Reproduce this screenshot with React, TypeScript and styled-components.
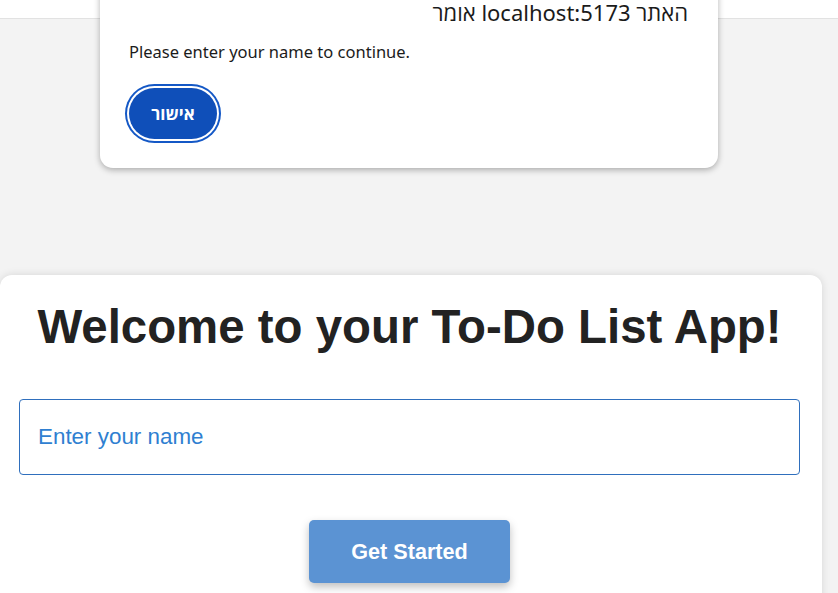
import React from "react";
import styled, { createGlobalStyle } from "styled-components";

const Global = createGlobalStyle`
  html, body { margin: 0; padding: 0; }
  body {
    background: #f3f3f3;
    font-family: "Liberation Sans", Arial, sans-serif;
    width: 838px;
    height: 593px;
    overflow: hidden;
    position: relative;
  }
`;

const TopBar = styled.div`
  height: 18px;
  background: #ffffff;
  border-bottom: 1px solid #e2e2e2;
`;

const Page = styled.div`
  padding-top: 256px;
`;

const Card = styled.div`
  width: 822px;
  box-sizing: border-box;
  background: #ffffff;
  border-radius: 12px;
  box-shadow: 0 0 8px rgba(0, 0, 0, 0.12);
  padding: 24px 22px 40px 19px;
  display: flex;
  flex-direction: column;
  align-items: center;
`;

const Heading = styled.h1`
  margin: 0;
  font-family: "Liberation Sans", Arial, sans-serif;
  font-weight: 700;
  font-size: 47.4px;
  line-height: 55px;
  color: #222222;
  text-align: center;
  white-space: nowrap;
`;

const NameInput = styled.input`
  margin-top: 45px;
  width: 100%;
  height: 76px;
  box-sizing: border-box;
  border: 1px solid #2f6fbd;
  border-radius: 4px;
  padding: 0 18px;
  font-family: "Liberation Sans", Arial, sans-serif;
  font-size: 22.4px;
  color: #222;
  outline: none;
  &::placeholder {
    color: #2f7fd1;
    opacity: 1;
  }
`;

const StartButton = styled.button`
  margin-top: 45px;
  width: 201px;
  height: 63px;
  border: none;
  border-radius: 5px;
  background: #5b93d3;
  color: #ffffff;
  font-family: "Liberation Sans", Arial, sans-serif;
  font-weight: 700;
  font-size: 21.6px;
  box-shadow: 0 4px 8px rgba(0, 0, 0, 0.25);
  cursor: pointer;
`;

const Dialog = styled.div`
  position: absolute;
  left: 100px;
  top: -20px;
  width: 618px;
  height: 188px;
  box-sizing: border-box;
  background: #ffffff;
  border-radius: 0 0 13px 13px;
  box-shadow: 0 2px 6px rgba(0, 0, 0, 0.3);
  padding: 20px 30px 0 29px;
  display: flex;
  flex-direction: column;
`;

const DialogTitle = styled.div`
  direction: rtl;
  text-align: right;
  font-family: "Noto Sans", "Open Sans", sans-serif;
  font-size: 22px;
  line-height: 26px;
  color: #1b1b1b;
  margin-top: -1px;
`;

const DialogText = styled.div`
  margin-top: 16px;
  font-family: "Noto Sans", "Open Sans", sans-serif;
  font-size: 16.5px;
  line-height: 22px;
  color: #1b1b1b;
`;

const OkButton = styled.button`
  margin-top: 25px;
  align-self: flex-start;
  width: 88px;
  height: 51px;
  border: none;
  border-radius: 26px;
  background: #0f4fb9;
  color: #ffffff;
  font-family: "Noto Sans", "Open Sans", sans-serif;
  font-weight: 700;
  font-size: 17px;
  box-shadow: 0 0 0 2px #ffffff, 0 0 0 4px #1458c6;
`;

export default function App() {
  return (
    <>
      <Global />
      <TopBar />
      <Page>
        <Card>
          <Heading>Welcome to your To-Do List App!</Heading>
          <NameInput placeholder="Enter your name" />
          <StartButton>Get Started</StartButton>
        </Card>
      </Page>
      <Dialog>
        <DialogTitle>האתר localhost:5173 אומר</DialogTitle>
        <DialogText>Please enter your name to continue.</DialogText>
        <OkButton>אישור</OkButton>
      </Dialog>
    </>
  );
}
